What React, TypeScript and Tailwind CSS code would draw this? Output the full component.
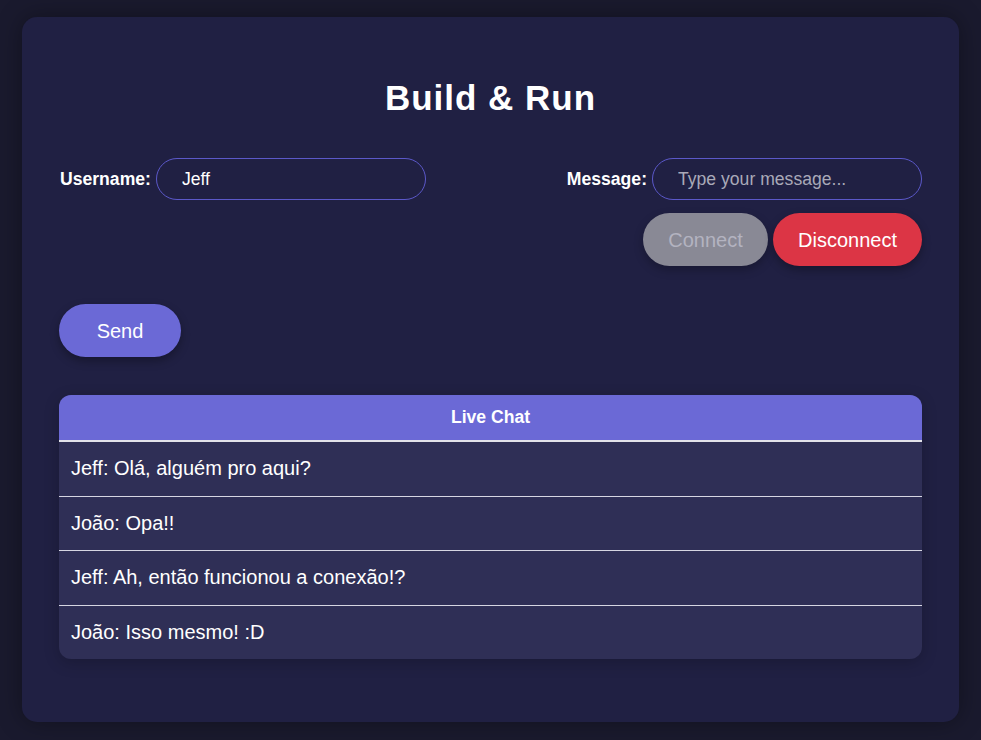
import { useState } from "react";

const messages = [
  "Jeff: Olá, alguém pro aqui?",
  "João: Opa!!",
  "Jeff: Ah, então funcionou a conexão!?",
  "João: Isso mesmo! :D",
];

export default function App() {
  const [username, setUsername] = useState("Jeff");
  const [message, setMessage] = useState("");

  return (
    <div
      className="min-h-screen bg-[#1a1a2e] px-[22px] pt-[17px] pb-[18px]"
      style={{ fontFamily: '"Liberation Sans", Arial, sans-serif' }}
    >
      <div className="h-[705px] rounded-[15px] bg-[#202043] px-[37px] pt-[61px] shadow-[0_0_24px_rgba(0,0,0,0.35)]">
        <h1 className="text-center text-[35px] leading-[40px] font-bold tracking-[1px] text-white">
          Build &amp; Run
        </h1>

        <div className="mt-[40px] flex justify-between">
          <div className="flex h-[42px] items-center gap-[5px] pl-px">
            <label className="text-[17.6px] font-bold text-white">Username:</label>
            <input
              value={username}
              onChange={(e) => setUsername(e.target.value)}
              className="h-[42px] w-[270px] rounded-full border border-[#5b58c9] bg-transparent px-[25px] text-[17.6px] text-white outline-none"
            />
          </div>

          <div className="flex flex-col items-end">
            <div className="flex h-[42px] items-center gap-[5px]">
              <label className="text-[17.6px] font-bold text-white">Message:</label>
              <input
                value={message}
                onChange={(e) => setMessage(e.target.value)}
                placeholder="Type your message..."
                className="h-[42px] w-[270px] rounded-full border border-[#5b58c9] bg-transparent px-[25px] text-[17.6px] text-white outline-none placeholder:text-[#a9a9b8]"
              />
            </div>
            <div className="mt-[13px] flex gap-[5px]">
              <button
                disabled
                className="h-[53px] w-[125px] rounded-full bg-[#898995] text-[20px] text-[#b3b3c0] shadow-[0_4px_10px_rgba(0,0,0,0.25)]"
              >
                Connect
              </button>
              <button className="h-[53px] w-[149px] rounded-full bg-[#dc3545] text-[20px] text-white shadow-[0_4px_10px_rgba(0,0,0,0.3)]">
                Disconnect
              </button>
            </div>
          </div>
        </div>

        <button className="mt-[38px] h-[53px] w-[122px] rounded-full bg-[#6b69d6] text-[20px] text-white shadow-[0_4px_10px_rgba(0,0,0,0.3)]">
          Send
        </button>

        <div className="mt-[38px] overflow-hidden rounded-[12px] bg-[#2f2f56] shadow-[0_4px_16px_rgba(0,0,0,0.2)]">
          <div className="border-b-2 border-[#e2e2ea] bg-[#6b69d6] py-[12px] text-center text-[17.6px] leading-[21px] font-bold text-white">
            Live Chat
          </div>
          {messages.map((m, i) => (
            <div
              key={i}
              className={`px-[12px] py-[15px] text-[20px] leading-[23.5px] text-white ${
                i < messages.length - 1 ? "border-b border-[#d6d6e2]" : ""
              }`}
            >
              {m}
            </div>
          ))}
        </div>
      </div>
    </div>
  );
}
